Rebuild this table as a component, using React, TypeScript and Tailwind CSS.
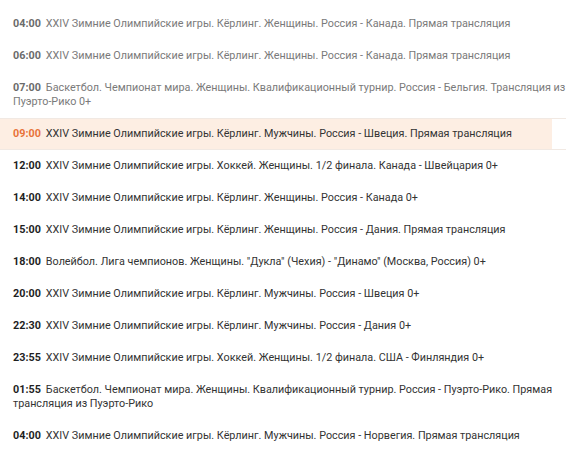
import React from "react";

type Item = { t: string; s: string; state: "past" | "now" | "future" };

const items: Item[] = [
  { t: "04:00", s: "XXIV Зимние Олимпийские игры. Кёрлинг. Женщины. Россия - Канада. Прямая трансляция", state: "past" },
  { t: "06:00", s: "XXIV Зимние Олимпийские игры. Кёрлинг. Женщины. Россия - Канада. Прямая трансляция", state: "past" },
  { t: "07:00", s: "Баскетбол. Чемпионат мира. Женщины. Квалификационный турнир. Россия - Бельгия. Трансляция из Пуэрто-Рико 0+", state: "past" },
  { t: "09:00", s: "XXIV Зимние Олимпийские игры. Кёрлинг. Мужчины. Россия - Швеция. Прямая трансляция", state: "now" },
  { t: "12:00", s: "XXIV Зимние Олимпийские игры. Хоккей. Женщины. 1/2 финала. Канада - Швейцария 0+", state: "future" },
  { t: "14:00", s: "XXIV Зимние Олимпийские игры. Кёрлинг. Женщины. Россия - Канада 0+", state: "future" },
  { t: "15:00", s: "XXIV Зимние Олимпийские игры. Кёрлинг. Женщины. Россия - Дания. Прямая трансляция", state: "future" },
  { t: "18:00", s: "Волейбол. Лига чемпионов. Женщины. \"Дукла\" (Чехия) - \"Динамо\" (Москва, Россия) 0+", state: "future" },
  { t: "20:00", s: "XXIV Зимние Олимпийские игры. Кёрлинг. Мужчины. Россия - Швеция 0+", state: "future" },
  { t: "22:30", s: "XXIV Зимние Олимпийские игры. Кёрлинг. Мужчины. Россия - Дания 0+", state: "future" },
  { t: "23:55", s: "XXIV Зимние Олимпийские игры. Хоккей. Женщины. 1/2 финала. США - Финляндия 0+", state: "future" },
  { t: "01:55", s: "Баскетбол. Чемпионат мира. Женщины. Квалификационный турнир. Россия - Пуэрто-Рико. Прямая трансляция из Пуэрто-Рико", state: "future" },
  { t: "04:00", s: "XXIV Зимние Олимпийские игры. Кёрлинг. Мужчины. Россия - Норвегия. Прямая трансляция", state: "future" },
];

export default function App() {
  return (
    <div className="w-[566px] h-[475px] bg-white overflow-hidden pt-[8px] text-[10.8px] leading-[14px]" style={{ fontFamily: "Roboto, 'Liberation Sans', sans-serif" }}>
      {items.map((it, i) => {
        if (it.state === "now") {
          return (
            <div key={i} className="border-y border-[#f1e9e3] bg-[linear-gradient(to_right,#fdeee3_552px,transparent_552px)] pl-[13px] py-[8px]">
              <span className="text-[#e8733a] font-bold mr-[5px]">{it.t}</span>
              <span className="text-[#333]">{it.s}</span>
            </div>
          );
        }
        const past = it.state === "past";
        return (
          <div key={i} className="pl-[13px] py-[9px]">
            <span className={past ? "text-[#6b6b6b] font-bold mr-[5px]" : "text-[#1f1f1f] font-bold mr-[5px]"}>{it.t}</span>
            <span className={past ? "text-[#7a7a7a]" : "text-[#333]"}>{it.s}</span>
          </div>
        );
      })}
    </div>
  );
}
